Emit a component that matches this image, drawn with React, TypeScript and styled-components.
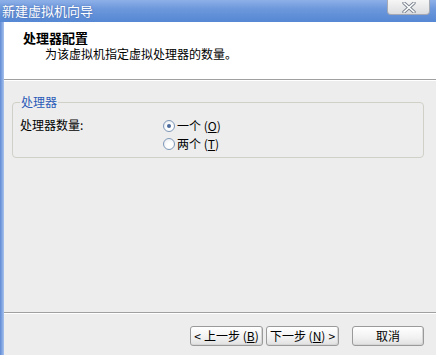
import React from "react";
import styled, { createGlobalStyle } from "styled-components";

const Global = createGlobalStyle`
  html, body { margin: 0; padding: 0; background: #ededed; }
  body { font-family: "Noto Sans CJK SC", "Noto Sans", sans-serif; font-size: 12px; color: #000; }
  * { box-sizing: border-box; }
`;

const Window = styled.div`
  width: 436px;
  height: 355px;
  display: flex;
  flex-direction: column;
  overflow: hidden;
  background: #ededed;
`;

const TitleBar = styled.div`
  height: 22px;
  flex: none;
  display: flex;
  align-items: flex-start;
  justify-content: space-between;
  background: linear-gradient(to bottom, #8eb0e8 0%, #6d98dc 40%, #5587d3 100%);
  padding-left: 2px;
`;

const TitleText = styled.div`
  color: #fff;
  font-size: 13px;
  line-height: 20px;
  padding-top: 1px;
  text-shadow: 0 0 2px rgba(40, 70, 140, 0.6);
`;

const CloseButton = styled.div`
  width: 43px;
  height: 15px;
  margin-right: 6px;
  border: 1px solid #a4a9b4;
  border-top: none;
  border-radius: 0 0 4px 4px;
  background: linear-gradient(to bottom, #f6f6f6, #dcdde0);
  display: flex;
  align-items: center;
  justify-content: center;
`;

const Body = styled.div`
  flex: 1;
  display: flex;
`;

const LeftEdge = styled.div`
  width: 4px;
  flex: none;
  background: linear-gradient(to right, #5f8ad4, #a7c2ee);
`;

const Content = styled.div`
  flex: 1;
  display: flex;
  flex-direction: column;
`;

const Header = styled.div`
  height: 58px;
  background: #fff;
  padding: 8px 0 0 19px;
  border-bottom: 1px solid #a0a0a0;
  box-shadow: 0 1px 0 #fff;
`;

const HeaderTitle = styled.div`
  font-weight: bold;
  font-size: 13px;
  line-height: 15px;
`;

const HeaderSub = styled.div`
  font-size: 12px;
  line-height: 14px;
  padding-left: 22px;
  margin-top: 2px;
`;

const Main = styled.div`
  flex: 1;
  padding: 15px 12px 0 8px;
`;

const Group = styled.fieldset`
  margin: 0;
  height: 63px;
  border: 1px solid #d0d0c8;
  border-radius: 4px;
  padding: 5px 7px 0 7px;
  display: grid;
  grid-template-columns: 143px 1fr;
  align-content: start;
`;

const Legend = styled.legend`
  color: #2a5ab8;
  font-size: 12px;
  line-height: 14px;
  padding: 0 1px;
  margin-left: 0px;
`;

const FieldLabel = styled.div`
  line-height: 14px;
  padding-top: 4px;
`;

const RadioList = styled.div`
  display: flex;
  flex-direction: column;
  gap: 4px;
  padding-top: 5px;
`;

const RadioRow = styled.label`
  display: flex;
  align-items: center;
  gap: 2px;
  line-height: 14px;
`;

const RadioCircle = styled.span<{ $checked?: boolean }>`
  width: 12px;
  height: 12px;
  border-radius: 50%;
  border: 1px solid #7e98b8;
  background: radial-gradient(circle at 60% 65%, #ffffff 30%, #e2e6ec 100%);
  display: flex;
  align-items: center;
  justify-content: center;
  &::after {
    content: "";
    display: ${(p) => (p.$checked ? "block" : "none")};
    width: 4px;
    height: 4px;
    border-radius: 50%;
    background: #4a6a9c;
  }
`;

const FooterLine = styled.div`
  height: 1px;
  background: #a0a0a0;
  box-shadow: 0 1px 0 #fff;
`;

const Footer = styled.div`
  height: 42px;
  display: flex;
  align-items: flex-start;
  justify-content: flex-end;
  padding: 13px 12px 0 0;
`;

const NavGroup = styled.div`
  display: flex;
  gap: 3px;
  margin-right: 13px;
`;

const Button = styled.button<{ $w: number }>`
  width: ${(p) => p.$w}px;
  height: 20px;
  padding: 0;
  font-family: inherit;
  font-size: 12px;
  line-height: 16px;
  color: #000;
  border: 1px solid #9a9a9a;
  border-radius: 3px;
  background: linear-gradient(to bottom, #ffffff 0%, #f1f1f1 60%, #e0e0e0 100%);
  box-shadow: inset -1px -1px 0 #d6d6d6;
  display: flex;
  align-items: center;
  justify-content: center;
  gap: 3px;
`;

const Key = styled.span`
  text-decoration: underline;
`;

export default function App() {
  return (
    <>
      <Global />
      <Window>
        <TitleBar>
          <TitleText>新建虚拟机向导</TitleText>
          <CloseButton>
            <svg width="16" height="11" viewBox="0 0 16 11">
              <path d="M3 1 L13 10 M13 1 L3 10" stroke="#7d8590" strokeWidth="3.4" strokeLinecap="round" />
              <path d="M3 1 L13 10 M13 1 L3 10" stroke="#ffffff" strokeWidth="1.6" strokeLinecap="round" />
            </svg>
          </CloseButton>
        </TitleBar>
        <Body>
          <LeftEdge />
          <Content>
            <Header>
              <HeaderTitle>处理器配置</HeaderTitle>
              <HeaderSub>为该虚拟机指定虚拟处理器的数量。</HeaderSub>
            </Header>
            <Main>
              <Group>
                <Legend>处理器</Legend>
                <FieldLabel>处理器数量:</FieldLabel>
                <RadioList>
                  <RadioRow>
                    <RadioCircle $checked />
                    <span>一个 (<Key>O</Key>)</span>
                  </RadioRow>
                  <RadioRow>
                    <RadioCircle />
                    <span>两个 (<Key>T</Key>)</span>
                  </RadioRow>
                </RadioList>
              </Group>
            </Main>
            <FooterLine />
            <Footer>
              <NavGroup>
                <Button $w={73}>
                  <span>&lt;</span>
                  <span>上一步 (<Key>B</Key>)</span>
                </Button>
                <Button $w={73}>
                  <span>下一步 (<Key>N</Key>)</span>
                  <span>&gt;</span>
                </Button>
              </NavGroup>
              <Button $w={72}>取消</Button>
            </Footer>
          </Content>
        </Body>
      </Window>
    </>
  );
}
